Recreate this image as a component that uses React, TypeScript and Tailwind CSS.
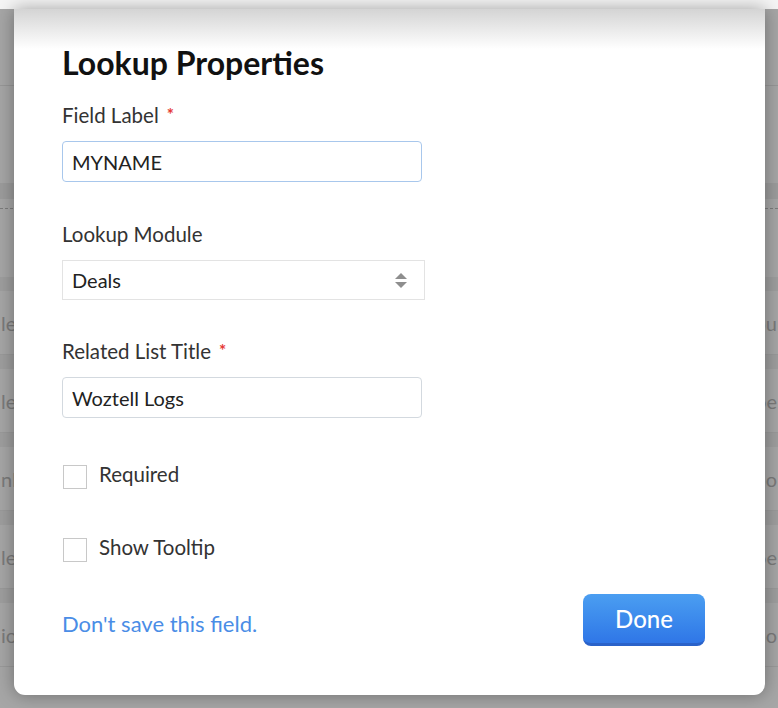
import { useState } from "react";

const rows = [
  { left: "le", right: "u" },
  { left: "le", right: "e" },
  { left: "nb", right: "o" },
  { left: "le", right: "e" },
  { left: "io", right: "o" },
];

function Checkbox({ label, checked, onChange }: { label: string; checked: boolean; onChange: () => void }) {
  return (
    <label className="flex items-center cursor-pointer">
      <span
        onClick={onChange}
        className={`w-[24px] h-[24px] ml-[1px] border border-[#c8c8c8] flex items-center justify-center ${checked ? "bg-[#3b82f6]" : "bg-white"}`}
      />
      <span className="ml-[12px] text-[20.5px] leading-[24px] text-[#333] -mt-[6px]">{label}</span>
    </label>
  );
}

function Required() {
  return <span className="text-[#e53935] text-[17px] font-bold ml-[8px] align-top">*</span>;
}

export default function App() {
  const [required, setRequired] = useState(false);
  const [tooltip, setTooltip] = useState(false);

  return (
    <div className="relative w-[778px] h-[708px] overflow-hidden bg-[#a6a6a6] font-['Lato',sans-serif]">
      {/* background page (dimmed) */}
      <div className="h-[9px] bg-[#f5f5f5]" />
      <div className="h-[77px] border-b border-[#979797]" />
      <div className="h-[97px]" />
      <div className="h-[16px] bg-[#9c9c9c]" />
      <div className="h-[10px] border-b border-dashed border-[#7c7c7c]" />
      <div className="h-[68px]" />
      {rows.map((r, i) => (
        <div key={i} className="h-[78px] flex flex-col">
          <div className="h-[14px] bg-[#9e9e9e]" />
          <div className="flex-1 flex items-center justify-between text-[20px] text-[#7a7a7a] border-b border-[#9a9a9a]">
            <span className="ml-[1px]">{r.left + "ld"}</span>
            <span className="mr-[1px]">{"Lo" + r.right}</span>
          </div>
        </div>
      ))}

      {/* modal */}
      <div className="absolute left-[14px] top-[9px] w-[751px] h-[686px] bg-white rounded-b-[11px] shadow-[0_0_18px_rgba(0,0,0,0.35)] overflow-hidden">
        <div className="absolute inset-x-0 top-0 h-[40px] bg-gradient-to-b from-[#d4d4d4] to-white/0 pointer-events-none" />
        <div className="relative pl-[48px] pr-[60px] pt-[36px]">
          <h1 className="text-[32px] leading-[36px] font-bold text-[#111]">Lookup Properties</h1>

          <div className="mt-[22px] text-[20.5px] leading-[24px] text-[#333]">
            Field Label<Required />
          </div>
          <input
            defaultValue="MYNAME"
            className="mt-[14px] block w-[360px] h-[41px] px-[9px] border border-[#a8c7ec] rounded-[4px] text-[20px] text-[#222] outline-none"
          />

          <div className="mt-[40px] text-[20.5px] leading-[24px] text-[#333]">Lookup Module</div>
          <div className="mt-[14px] w-[363px] h-[40px] border border-[#e3e3e3] flex items-center justify-between px-[9px]">
            <span className="text-[20px] text-[#222]">Deals</span>
            <svg width="14" height="18" viewBox="0 0 14 18" className="mr-[7px]">
              <path d="M7 2 L13 8 H1 Z" fill="#8e8e8e" />
              <path d="M1 11 H13 L7 17 Z" fill="#8e8e8e" />
            </svg>
          </div>

          <div className="mt-[39px] text-[20.5px] leading-[24px] text-[#333]">
            Related List Title<Required />
          </div>
          <input
            defaultValue="Woztell Logs"
            className="mt-[14px] block w-[360px] h-[41px] px-[9px] border border-[#d3d9df] rounded-[4px] text-[20px] text-[#222] outline-none"
          />

          <div className="mt-[47px]">
            <Checkbox label="Required" checked={required} onChange={() => setRequired(!required)} />
          </div>
          <div className="mt-[49px]">
            <Checkbox label="Show Tooltip" checked={tooltip} onChange={() => setTooltip(!tooltip)} />
          </div>

          <div className="mt-[32px] flex items-center justify-between">
            <a className="text-[22px] text-[#4a8de6] mt-[7px] cursor-pointer">Don't save this field.</a>
            <button className="w-[122px] h-[52px] rounded-[8px] bg-gradient-to-b from-[#4b9ef1] to-[#2f76e7] border-b-[3px] border-[#2a62c9] text-white text-[24px] font-medium">
              Done
            </button>
          </div>
        </div>
      </div>
    </div>
  );
}
